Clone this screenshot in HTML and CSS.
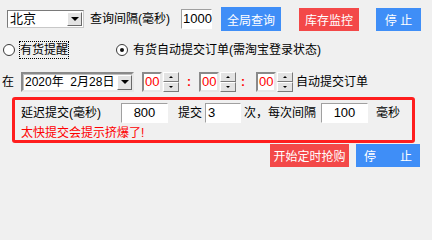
FILE: index.html
```html
<!DOCTYPE html>
<html>
<head>
<meta charset="utf-8">
<link rel="stylesheet" href="styles.css">
</head>
<body>
<div class="app">
  <div class="row row1">
    <div class="select"><span class="select-val">北京</span><span class="drop"><i class="tri"></i></span></div>
    <span class="lbl lbl-interval">查询间隔(毫秒)</span>
    <div class="input in-1000">1000</div>
    <div class="btn blue b-query">全局查询</div>
    <div class="btn red b-monitor">库存监控</div>
    <div class="btn blue b-stop">停&nbsp;止</div>
  </div>

  <div class="row row2">
    <span class="radio r1"></span>
    <span class="focus">有货提醒</span>
    <span class="radio checked r2"></span>
    <span class="lbl r2-lbl">有货自动提交订单(需淘宝登录状态)</span>
  </div>

  <div class="row row3">
    <span class="lbl at">在</span>
    <div class="date"><span class="date-val">2020年&nbsp; 2月28日</span><span class="drop"><i class="tri"></i></span></div>
    <div class="time t1"><span class="tf">00</span><span class="spin"><span class="sb"><i class="up"></i></span><span class="sb"><i class="dn"></i></span></span></div>
    <span class="colon c1">:</span>
    <div class="time t2"><span class="tf">00</span><span class="spin"><span class="sb"><i class="up"></i></span><span class="sb"><i class="dn"></i></span></span></div>
    <span class="colon c2">:</span>
    <div class="time t3"><span class="tf">00</span><span class="spin"><span class="sb"><i class="up"></i></span><span class="sb"><i class="dn"></i></span></span></div>
    <span class="lbl auto-lbl">自动提交订单</span>
  </div>

  <div class="box">
    <div class="box-row">
      <span class="lbl delay-lbl">延迟提交(毫秒)</span>
      <div class="input num in-800">800</div>
      <span class="lbl submit-lbl">提交</span>
      <div class="input num in-3">3</div>
      <span class="lbl times-lbl">次，每次间隔</span>
      <div class="input num in-100">100</div>
      <span class="lbl ms-lbl">毫秒</span>
    </div>
    <div class="warn">太快提交会提示挤爆了!</div>
  </div>

  <div class="row row5">
    <div class="btn red b-start">开始定时抢购</div>
    <div class="btn blue b-stop2"><span>停</span><span>止</span></div>
  </div>
</div>
</body>
</html>
```

FILE: styles.css
```css
html, body {
  margin: 0;
  padding: 0;
  background: #f0f0f0;
}
body {
  font-family: "Liberation Sans", "Noto Sans CJK SC", sans-serif;
  font-size: 12px;
  color: #000;
}
.app {
  display: flex;
  flex-direction: column;
  width: 432px;
  height: 237px;
}
.row {
  display: flex;
  align-items: center;
}
.lbl {
  white-space: nowrap;
  line-height: 14px;
}

/* row 1 */
.row1 { margin-top: 7px; height: 24px; }
.select {
  margin-left: 7px;
  width: 77px;
  height: 18px;
  box-sizing: border-box;
  background: #fff;
  border: 1px solid #7a7a7a;
  border-right-color: #c8c8c8;
  border-bottom-color: #c8c8c8;
  display: flex;
  align-items: center;
  justify-content: space-between;
}
.select-val { padding-left: 2px; font-size: 13px; line-height: 14px; }
.drop {
  width: 15px;
  height: 14px;
  margin-right: 1px;
  box-sizing: border-box;
  background: #e3e3e3;
  border: 1px solid;
  border-color: #fff #696969 #696969 #fff;
  display: flex;
  align-items: center;
  justify-content: center;
}
.tri {
  display: block;
  width: 0;
  height: 0;
  border-left: 4px solid transparent;
  border-right: 4px solid transparent;
  border-top: 4px solid #000;
}
.lbl-interval { margin-left: 6px; width: 85px; }
.input {
  box-sizing: border-box;
  background: #fff;
  border: 1px solid;
  border-color: #a0a0a0 #fff #fff #a0a0a0;
  height: 20px;
  line-height: 18px;
  white-space: nowrap;
}
.in-1000 { margin-left: 6px; width: 31px; padding-left: 1px; font-size: 13px; }
.btn {
  display: flex;
  align-items: center;
  justify-content: center;
  color: #fff;
  font-size: 12px;
  white-space: nowrap;
}
.blue { background: #3f8ef7; }
.red { background: #f34848; }
.b-query { margin-left: 9px; width: 60px; height: 24px; }
.b-monitor { margin-left: 18px; width: 60px; height: 23px; align-self: flex-end; }
.b-stop { margin-left: 17px; width: 45px; height: 23px; align-self: flex-end; }

/* row 2 */
.row2 { margin-top: 8px; height: 22px; }
.radio {
  width: 12px;
  height: 12px;
  box-sizing: border-box;
  border-radius: 50%;
  border: 1.5px solid #3a3a3a;
  background: #fff;
  display: flex;
  align-items: center;
  justify-content: center;
}
.radio.checked::after {
  content: "";
  width: 4px;
  height: 4px;
  border-radius: 50%;
  background: #111;
}
.r1 { margin-left: 3px; }
.focus {
  margin-left: 4px;
  border: 1px dotted #000;
  padding: 1px 0;
  line-height: 14px;
  white-space: nowrap;
}
.r2 { margin-left: 47px; }
.r2-lbl { margin-left: 5px; }

/* row 3 */
.row3 { margin-top: 11px; height: 20px; }
.at { margin-left: 2px; width: 12px; }
.date {
  margin-left: 7px;
  width: 113px;
  height: 20px;
  box-sizing: border-box;
  background: #fff;
  border: 2px solid;
  border-color: #8a8a8a #e8e8e8 #e8e8e8 #8a8a8a;
  box-shadow: inset 1px 1px 0 #c0c0c0;
  display: flex;
  align-items: center;
  justify-content: space-between;
}
.date-val { padding-left: 2px; font-size: 12px; line-height: 14px; white-space: nowrap; }
.date .drop { width: 15px; height: 15px; margin-right: 0; }
.time {
  display: flex;
  height: 20px;
}
.t1 { margin-left: 8px; }
.t2 { margin-left: 8px; }
.t3 { margin-left: 11px; }
.tf {
  width: 20px;
  height: 20px;
  box-sizing: border-box;
  background: #fff;
  border: 2px solid;
  border-color: #8a8a8a #e8e8e8 #e8e8e8 #8a8a8a;
  color: #ff0000;
  font-size: 13px;
  line-height: 16px;
  padding-left: 1px;
}
.spin {
  display: flex;
  flex-direction: column;
  width: 16px;
  height: 20px;
  margin-left: 1px;
}
.sb {
  flex: 1;
  box-sizing: border-box;
  background: #e3e3e3;
  border: 1px solid;
  border-color: #fff #7a7a7a #7a7a7a #fff;
  display: flex;
  align-items: center;
  justify-content: center;
}
.sb i { display: block; width: 0; height: 0; border-left: 2px solid transparent; border-right: 2px solid transparent; }
.sb .up { border-bottom: 2px solid #000; }
.sb .dn { border-top: 2px solid #000; }
.colon {
  color: #ff0000;
  font-weight: bold;
  width: 4px;
  font-size: 12px;
  line-height: 14px;
}
.c1 { margin-left: 8px; }
.c2 { margin-left: 5px; }
.auto-lbl { margin-left: 3px; }

/* red box */
.box {
  margin-top: 5px;
  margin-left: 12px;
  width: 403px;
  height: 46px;
  box-sizing: border-box;
  border: 3px solid #ff1e1e;
  border-radius: 3px;
  overflow: hidden;
  display: flex;
  flex-direction: column;
}
.box-row {
  display: flex;
  align-items: center;
  height: 20px;
  margin-top: 3px;
  padding-left: 6px;
}
.delay-lbl { width: 100px; }
.num { text-align: center; font-size: 13px; }
.in-800 { width: 47px; }
.submit-lbl { margin-left: 10px; width: 27px; }
.in-3 { width: 36px; text-align: left; padding-left: 2px; }
.in-100 { width: 47px; }
.times-lbl { margin-left: 3px; width: 77px; }
.ms-lbl { margin-left: 8px; }
.warn {
  padding-left: 6px;
  padding-top: 3px;
  color: #ff0000;
  line-height: 14px;
  white-space: nowrap;
}

/* row 5 */
.row5 { margin-top: 1px; height: 23px; }
.b-start { margin-left: 270px; width: 79px; height: 23px; }
.b-stop2 { margin-left: 7px; width: 64px; height: 23px; gap: 24px; }
```
